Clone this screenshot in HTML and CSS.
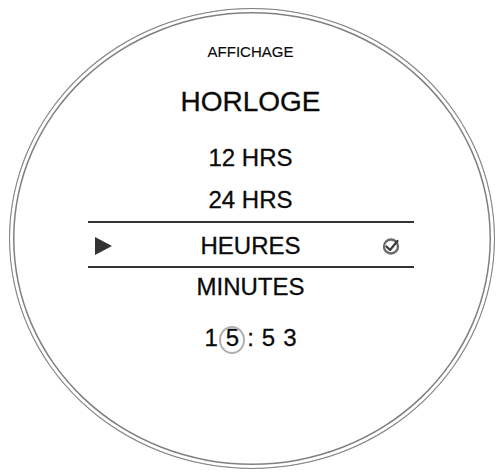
FILE: index.html
```html
<!DOCTYPE html>
<html lang="fr">
<head>
<meta charset="utf-8">
<title>Affichage - Horloge</title>
<link rel="stylesheet" href="styles.css">
</head>
<body>
<div class="screen">
  <div class="dial">
    <div class="title">AFFICHAGE</div>
    <div class="heading">HORLOGE</div>
    <div class="item item-first">12 HRS</div>
    <div class="item item-second">24 HRS</div>
    <div class="menu">
      <div class="selected">
        <span class="arrow">
          <svg width="17" height="18" viewBox="0 0 17 18"><polygon points="0,0 17,9 0,18" fill="#333"/></svg>
        </span>
        <span class="label">HEURES</span>
        <span class="check">
          <svg width="18" height="18" viewBox="0 0 18 18">
            <circle cx="9" cy="9.5" r="7" fill="none" stroke="#6a6a6a" stroke-width="2.4"/>
            <path d="M4.5 9.5 L8 13 L15.5 4" fill="none" stroke="#3a3a3a" stroke-width="2.2" stroke-linecap="round" stroke-linejoin="round"/>
          </svg>
        </span>
      </div>
    </div>
    <div class="item item-minutes">MINUTES</div>
    <div class="time">
      <span class="digit">1</span>
      <span class="digit digit-active">5</span>
      <span class="colon">:</span>
      <span class="digit">5</span>
      <span class="digit">3</span>
    </div>
  </div>
</div>
</body>
</html>
```
FILE: styles.css
```css
html, body {
  margin: 0;
  padding: 0;
  background: #ffffff;
}

body {
  font-family: "Liberation Sans", Arial, sans-serif;
  color: #0a0a0a;
  -webkit-text-stroke: 0.3px #0a0a0a;
}

.screen {
  width: 501px;
  height: 474px;
  padding: 8px 0 0 9px;
  box-sizing: border-box;
}

.dial {
  width: 486px;
  height: 461px;
  box-sizing: border-box;
  border: 1.5px solid #808080;
  border-radius: 50%;
  box-shadow: inset 0 0 0 3px #ffffff, inset 0 0 0 4.5px #808080;
  padding: 34.5px 3px 0 0;
  display: flex;
  flex-direction: column;
  align-items: center;
}

.title {
  font-size: 15px;
  line-height: 15px;
  height: 15px;
  -webkit-text-stroke: 0.15px #0a0a0a;
}

.heading {
  font-size: 28px;
  line-height: 28px;
  height: 28px;
  margin-top: 29.3px;
}

.item {
  font-size: 24px;
  line-height: 24px;
  height: 24px;
}

.item-first {
  margin-top: 30.6px;
}

.item-second {
  margin-top: 18px;
}

.menu {
  width: 326px;
  margin-top: 9.1px;
  border-top: 2px solid #333333;
  border-bottom: 2px solid #333333;
}

.selected {
  display: grid;
  grid-template-columns: 1fr auto 1fr;
  align-items: center;
  height: 43px;
  box-sizing: border-box;
  padding: 10.9px 0 8.1px;
}

.arrow {
  justify-self: start;
  margin-left: 7px;
  display: flex;
  margin-top: -1px;
}

.label {
  font-size: 24px;
  line-height: 24px;
  height: 24px;
}

.check {
  justify-self: end;
  margin-right: 14px;
  display: flex;
  filter: blur(0.5px);
}

.item-minutes {
  margin-top: 6.9px;
}

.time {
  display: flex;
  gap: 8px;
  margin-top: 27px;
  font-size: 24px;
  line-height: 24px;
  height: 24px;
}

.digit-active {
  position: relative;
}

.digit-active::after {
  content: "";
  position: absolute;
  left: 50%;
  top: 50%;
  width: 22px;
  height: 24px;
  margin-left: -13px;
  margin-top: -12px;
  border: 2px solid #b0b0b0;
  border-radius: 50%;
  filter: blur(0.7px);
}
```
